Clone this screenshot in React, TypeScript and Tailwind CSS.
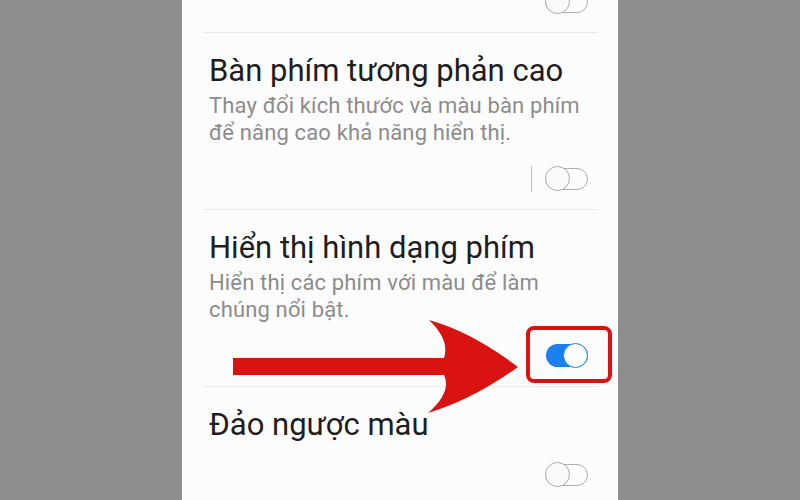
import React from 'react';

type Setting = {
    title: string;
    desc?: string[];
    on: boolean;
    separator?: boolean;
};

const settings: Setting[] = [
    {
        title: 'Bàn phím tương phản cao',
        desc: ['Thay đổi kích thước và màu bàn phím', 'để nâng cao khả năng hiển thị.'],
        on: false,
        separator: true,
    },
    {
        title: 'Hiển thị hình dạng phím',
        desc: ['Hiển thị các phím với màu để làm', 'chúng nổi bật.'],
        on: true,
    },
    {
        title: 'Đảo ngược màu',
        on: false,
    },
];

function Toggle({ on }: { on: boolean }) {
    if (on) {
        return (
            <div className="relative w-[42px] h-[25px] flex items-center">
                <div className="w-[42px] h-[23px] rounded-full bg-[#1c7ff0]" />
                <div className="absolute right-0 top-0 w-[25px] h-[25px] rounded-full bg-white border-[1.5px] border-[#1c7ff0]" />
            </div>
        );
    }
    return (
        <div className="relative w-[43px] h-[25px] flex items-center">
            <div className="w-[43px] h-[22px] rounded-full border-[1.5px] border-[#adadad]" />
            <div className="absolute left-0 top-0 w-[25px] h-[25px] rounded-full bg-[#fafafa] border-[1.5px] border-[#adadad]" />
        </div>
    );
}

function Divider() {
    return <div className="ml-[21px] mr-[20px] h-px bg-[#e9e9e9]" />;
}

function SettingRow({ item }: { item: Setting }) {
    return (
        <div className="pl-[27px] pr-[30px] pt-[20px] pb-[18px]">
            <div className="text-[31px] leading-[36px] text-[#1e1e1e]">{item.title}</div>
            {item.desc && (
                <div className="mt-[3px] text-[22px] tracking-[0.15px] leading-[27px] text-[#8c8c8c]">
                    {item.desc.map((line) => (
                        <div key={line}>{line}</div>
                    ))}
                </div>
            )}
            <div
                className={
                    'h-[25px] flex justify-end items-center gap-[13px] ' +
                    (item.desc ? 'mt-[20px]' : 'mt-[19px]')
                }
            >
                {item.separator && <div className="w-px h-[26px] bg-[#bdbdbd]" />}
                <Toggle on={item.on} />
            </div>
        </div>
    );
}

export default function App() {
    return (
        <div
            className="relative w-[800px] h-[500px] overflow-hidden bg-[#8d8d8d]"
            style={{ fontFamily: 'Roboto, "Noto Sans", sans-serif' }}
        >
            <div className="flow-root mx-auto w-[436px] h-full bg-[#fcfcfc]">
                {/* previous setting, scrolled mostly out of view */}
                <div className="-mt-[11px] pr-[30px] pb-[18px] flex justify-end">
                    <Toggle on={false} />
                </div>
                {settings.map((item) => (
                    <div key={item.title}>
                        <Divider />
                        <SettingRow item={item} />
                    </div>
                ))}
            </div>

            {/* annotation: red box round the active toggle */}
            <div className="absolute left-[526px] top-[326px] w-[86px] h-[57px] rounded-[8px] border-[4px] border-[#d91212]" />

            {/* annotation: red arrow */}
            <svg className="absolute left-[232px] top-[318px]" width="288" height="98" viewBox="232 318 288 98">
                <path
                    d="M429 320 Q472 332 518 367 Q472 400 428 413 Q452 392 444 375 L233 375 L233 358 L444 358 Q450 340 429 320 Z"
                    fill="#d91212"
                />
            </svg>
        </div>
    );
}
